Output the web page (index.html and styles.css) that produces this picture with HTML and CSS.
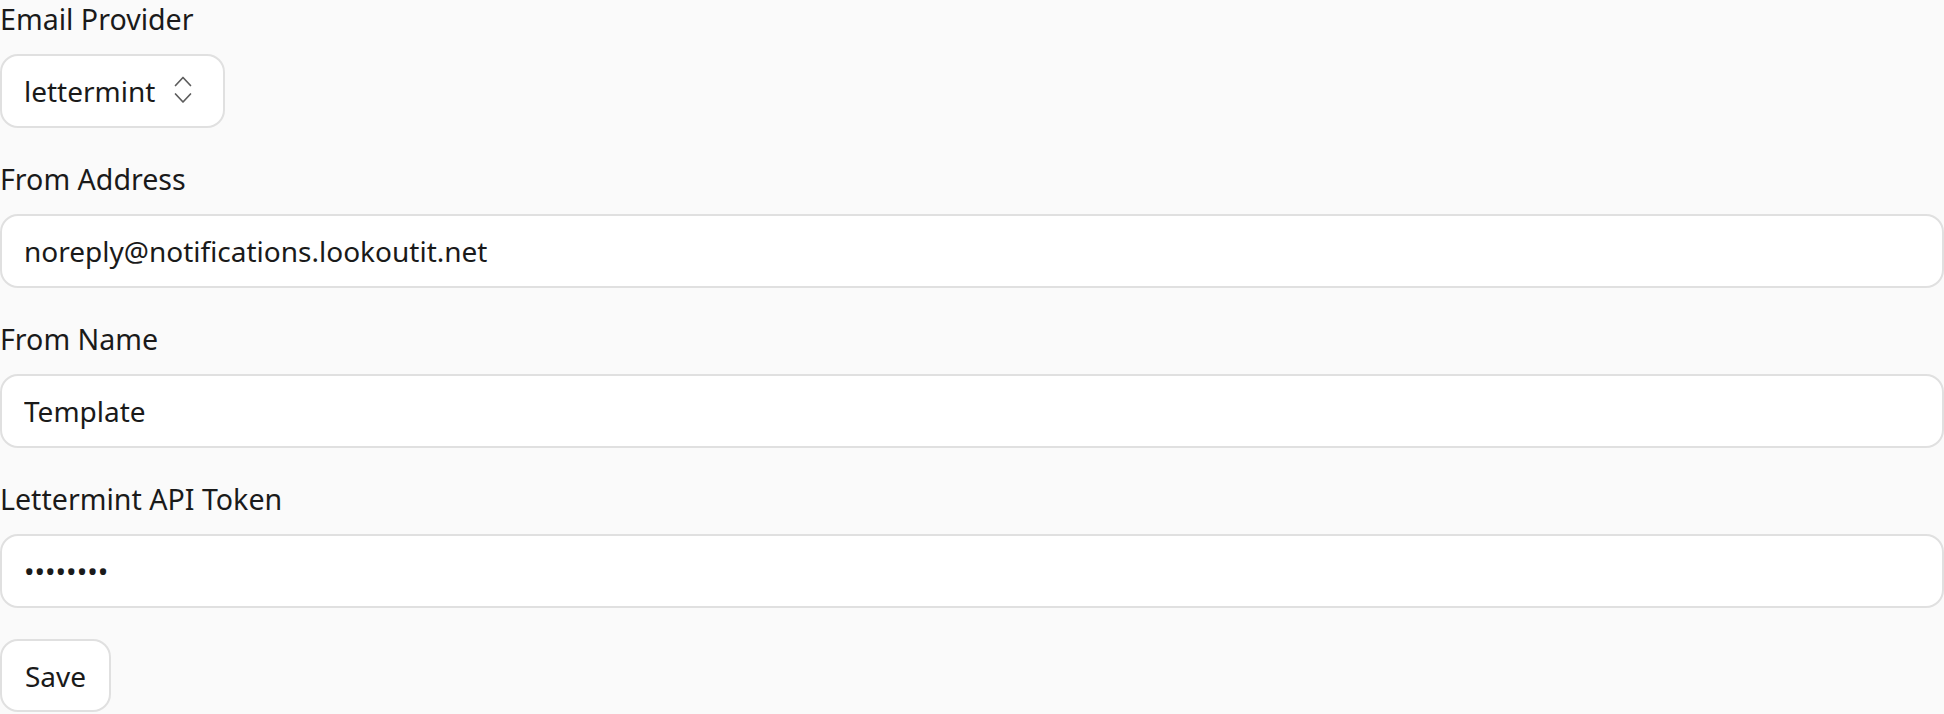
FILE: index.html
```html
<!DOCTYPE html>
<html lang="en">
<head>
<meta charset="utf-8">
<title>Email settings</title>
<link rel="stylesheet" href="styles.css">
</head>
<body>
<form class="form">
  <div class="field">
    <label class="label" for="provider">Email Provider</label>
    <div class="select-wrap">
      <select id="provider" class="select">
        <option>lettermint</option>
      </select>
      <svg class="chevrons" viewBox="0 0 18 28" width="18" height="28" aria-hidden="true">
        <path d="M1.5 9.5 L9 1.5 L16.5 9.5" fill="none" stroke="#5c5c5c" stroke-width="1.7" stroke-linecap="round" stroke-linejoin="round"/>
        <path d="M1.5 18 L9 26 L16.5 18" fill="none" stroke="#5c5c5c" stroke-width="1.7" stroke-linecap="round" stroke-linejoin="round"/>
      </svg>
    </div>
  </div>
  <div class="field">
    <label class="label" for="from">From Address</label>
    <input id="from" class="input" type="text" value="noreply@notifications.lookoutit.net">
  </div>
  <div class="field">
    <label class="label" for="name">From Name</label>
    <input id="name" class="input" type="text" value="Template">
  </div>
  <div class="field">
    <label class="label" for="token">Lettermint API Token</label>
    <input id="token" class="input" type="password" value="abcdefgh">
  </div>
  <div class="actions">
    <button type="button" class="button">Save</button>
  </div>
</form>
</body>
</html>
```

FILE: styles.css
```css
* { box-sizing: border-box; }

html, body {
  margin: 0;
  padding: 0;
  background: #fafafa;
}

body {
  font-family: "Noto Sans", "Open Sans", sans-serif;
  font-size: 28px;
  color: #1a1a1a;
}

.form {
  display: flex;
  flex-direction: column;
  gap: 32px;
}

.field {
  display: flex;
  flex-direction: column;
  gap: 16px;
}

.label {
  font-size: 28.6px;
  line-height: 38px;
  color: #1a1a1a;
}

.select-wrap {
  position: relative;
  width: 225px;
}

.select {
  appearance: none;
  -webkit-appearance: none;
  width: 225px;
  height: 74px;
  padding: 0 60px 0 22px;
  font-family: inherit;
  font-size: 28px;
  color: #1a1a1a;
  background: #ffffff;
  border: 2px solid #e0e0e0;
  border-radius: 18px;
  outline: none;
}

.chevrons {
  position: absolute;
  left: 174px;
  top: 22px;
  pointer-events: none;
}

.input {
  width: 100%;
  height: 74px;
  padding: 0 22px;
  font-family: inherit;
  font-size: 28px;
  color: #1a1a1a;
  background: #ffffff;
  border: 2px solid #e0e0e0;
  border-radius: 18px;
  outline: none;
}

.actions {
  display: flex;
  margin-top: -1px;
}

.button {
  height: 73px;
  padding: 0 23px;
  font-family: inherit;
  font-size: 28px;
  color: #1a1a1a;
  background: #ffffff;
  border: 2px solid #e0e0e0;
  border-radius: 18px;
  cursor: pointer;
}
```
